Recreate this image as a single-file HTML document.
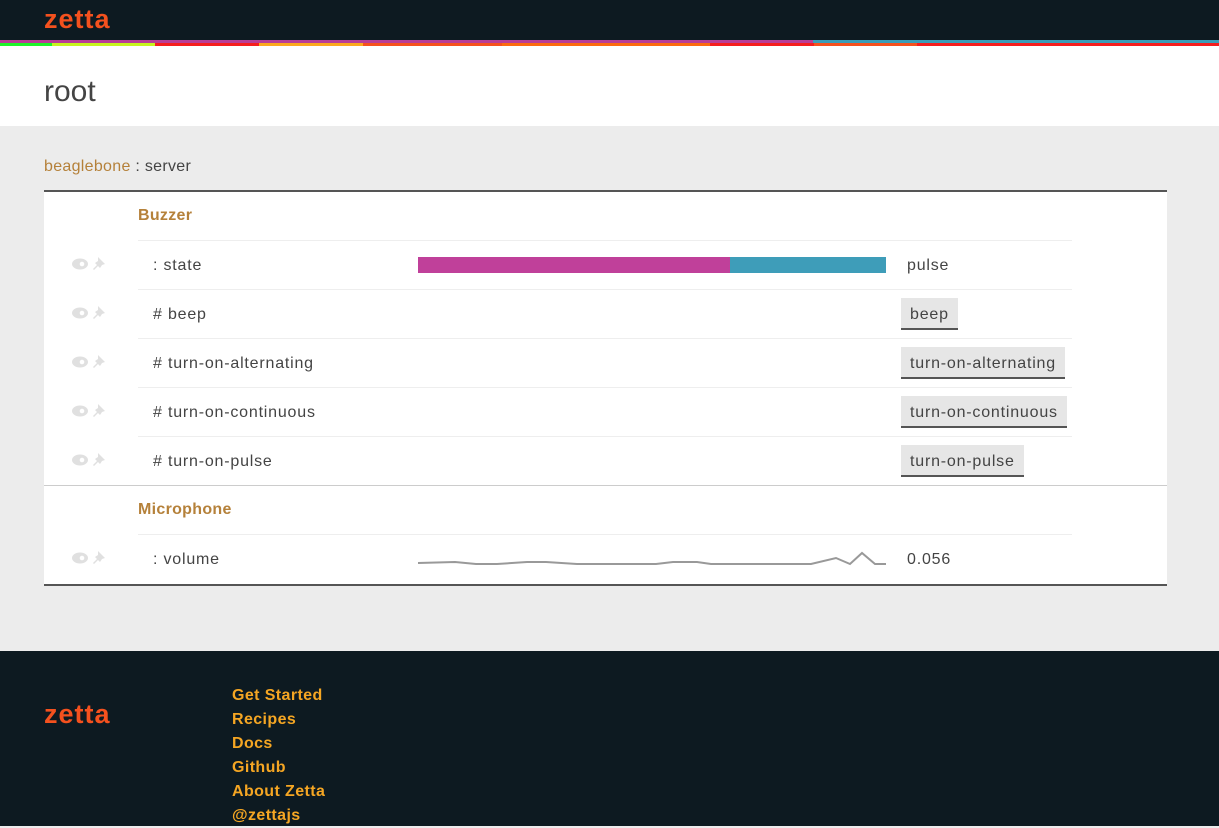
<!DOCTYPE html>
<html><head><meta charset="utf-8"><style>
*{margin:0;padding:0;box-sizing:border-box}
body{width:1219px;height:826px;position:relative;background:#ececec;font-family:"Liberation Sans","DejaVu Sans",sans-serif;color:#444;overflow:hidden}
.a{position:absolute}
.logo{font-weight:bold;color:#f4511e;font-size:27px;letter-spacing:1px}
.t{font-size:16px;color:#444;letter-spacing:0.8px}
.hl{position:absolute;left:138px;width:934px;height:1px;background:#eee}
.btn{position:absolute;left:901px;height:32px;background:#e6e6e6;border-bottom:2px solid #555;font-size:16px;padding:8px 9px 0;color:#444;letter-spacing:0.8px}
.f a{display:block;color:#f5a623;font-weight:bold;font-size:16px;line-height:24px;text-decoration:none;letter-spacing:0.4px}
</style></head><body>
<div class="a" style="left:0;top:0;width:1219px;height:40px;background:#0d1a21"></div>
<div class="a logo" style="left:44px;top:4px">zetta</div>
<div class="a" style="left:0;top:40px;width:813px;height:3px;background:#b83d96"></div>
<div class="a" style="left:813px;top:40px;width:406px;height:3px;background:#3a9db8"></div>
<div class="a" style="top:43px;height:3px;left:0;width:52px;background:#1ef52a"></div>
<div class="a" style="top:43px;height:3px;left:52px;width:103px;background:#c6f51e"></div>
<div class="a" style="top:43px;height:3px;left:155px;width:104px;background:#f51e1e"></div>
<div class="a" style="top:43px;height:3px;left:259px;width:104px;background:#fba81e"></div>
<div class="a" style="top:43px;height:3px;left:363px;width:139px;background:#f5511e"></div>
<div class="a" style="top:43px;height:3px;left:502px;width:208px;background:#fb6a10"></div>
<div class="a" style="top:43px;height:3px;left:710px;width:104px;background:#f51e1e"></div>
<div class="a" style="top:43px;height:3px;left:814px;width:103px;background:#f5511e"></div>
<div class="a" style="top:43px;height:3px;left:917px;width:302px;background:#f51e1e"></div>
<div class="a" style="left:0;top:46px;width:1219px;height:80px;background:#fff"></div>
<div class="a" style="left:44px;top:75px;font-size:30px;color:#444">root</div>
<div class="a" style="left:44px;top:158px;font-size:16px;letter-spacing:0.3px"><span style="color:#b5813a">beaglebone</span> : server</div>
<div class="a" style="left:44px;top:190px;width:1123px;height:396px;background:#fff;border-top:2px solid #555;border-bottom:2px solid #555"></div>
<div class="a" style="left:138px;top:207px;font-weight:bold;color:#b5813a;font-size:16px;letter-spacing:0.3px">Buzzer</div>
<div class="hl" style="top:240px"></div><div class="hl" style="top:289px"></div><div class="hl" style="top:338px"></div><div class="hl" style="top:387px"></div><div class="hl" style="top:436px"></div>
<div class="a" style="left:44px;top:485px;width:1123px;height:1px;background:#ccc"></div>
<div class="a" style="left:138px;top:501px;font-weight:bold;color:#b5813a;font-size:16px;letter-spacing:0.3px">Microphone</div>
<div class="hl" style="top:534px"></div>
<div class="a t" style="left:153px;top:257px">: state</div>
<div class="a t" style="left:153px;top:306px"># beep</div>
<div class="a t" style="left:153px;top:355px"># turn-on-alternating</div>
<div class="a t" style="left:153px;top:404px"># turn-on-continuous</div>
<div class="a t" style="left:153px;top:453px"># turn-on-pulse</div>
<div class="a t" style="left:153px;top:551px">: volume</div>
<div class="a" style="left:418px;top:257px;width:312px;height:16px;background:#c0409a"></div>
<div class="a" style="left:730px;top:257px;width:156px;height:16px;background:#3e9db9"></div>
<div class="a t" style="left:907px;top:257px">pulse</div>
<div class="btn" style="top:298px">beep</div>
<div class="btn" style="top:347px">turn-on-alternating</div>
<div class="btn" style="top:396px">turn-on-continuous</div>
<div class="btn" style="top:445px">turn-on-pulse</div>
<div class="a t" style="left:907px;top:551px">0.056</div>
<svg class="a" style="left:0;top:0" width="1219" height="826">
<polyline fill="none" stroke="#999" stroke-width="2" points="418,563 455,562 476,564 497,564 527,562 546,562 577,564 656,564 673,562 697,562 711,564 811,564 836,558 850,564 862,553 875,564 886,564"/>
<g fill="#e0e0e0">
<g id="i"><ellipse cx="80" cy="264" rx="8" ry="5.5"/><circle cx="82" cy="264" r="2.3" fill="#fff"/><path d="M98 257l7 7-3 1-2 3-2-2-4 4-1-1 4-4-2-2 3-2z"/></g>
<use href="#i" y="49"/><use href="#i" y="98"/><use href="#i" y="147"/><use href="#i" y="196"/><use href="#i" y="294"/>
</g></svg>
<div class="a" style="left:0;top:651px;width:1219px;height:175px;background:#0d1a21"></div>
<div class="a logo" style="left:44px;top:699px">zetta</div>
<div class="a f" style="left:232px;top:684px"><a>Get Started</a><a>Recipes</a><a>Docs</a><a>Github</a><a>About Zetta</a><a>@zettajs</a></div>
</body></html>
